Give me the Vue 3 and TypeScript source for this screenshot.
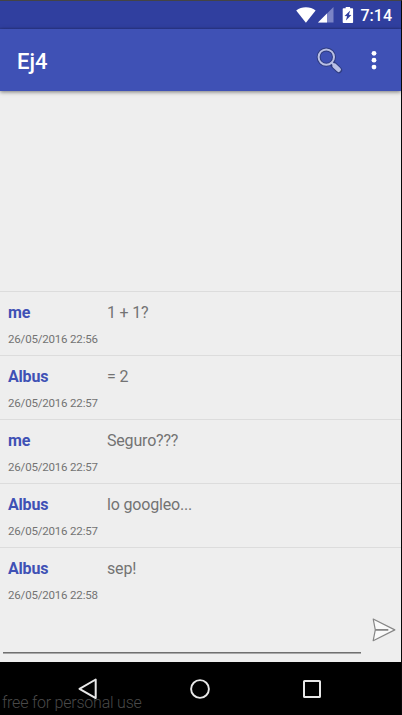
<script setup lang="ts">
interface Message {
  author: string
  text: string
  date: string
}

const messages: Message[] = [
  { author: 'me', text: '1 + 1?', date: '26/05/2016 22:56' },
  { author: 'Albus', text: '= 2', date: '26/05/2016 22:57' },
  { author: 'me', text: 'Seguro???', date: '26/05/2016 22:57' },
  { author: 'Albus', text: 'lo googleo...', date: '26/05/2016 22:57' },
  { author: 'Albus', text: 'sep!', date: '26/05/2016 22:58' },
]
</script>

<template>
  <div class="screen">
    <div class="status">
      <svg class="wifi" width="20" height="16" viewBox="0 0 20 16">
        <path d="M0.2 3.6C3 1.2 6.3 0.2 9.9 0.2S16.8 1.2 19.6 3.6L9.9 15.8Z" fill="#fff" />
      </svg>
      <svg class="signal" width="16" height="16" viewBox="0 0 16 16">
        <path d="M0 15.5L15.5 0V15.5Z" fill="#7b84c6" />
        <path d="M0 15.5L9 6.5V15.5Z" fill="#fff" />
      </svg>
      <svg class="battery" width="12" height="17" viewBox="0 0 12 17">
        <path d="M1.5 1.2H3.7V0H8.1V1.2H10.3Q11.1 1.2 11.1 2V15.2Q11.1 16 10.3 16H1.5Q.7 16 .7 15.2V2Q.7 1.2 1.5 1.2Z" fill="#fff" />
        <path d="M8.2 3.6L2.6 8.9L5.1 9.3L3.9 13.4L9.4 8.1L6.9 7.7Z" fill="#303f9f" />
      </svg>
      <span class="clock">7:14</span>
    </div>
    <header class="toolbar">
      <h1>Ej4</h1>
      <svg class="search" width="28" height="28" viewBox="0 0 28 28">
        <path d="M17.6 17.9L22.8 23" stroke="#2f3c80" stroke-width="6.6" stroke-linecap="round" />
        <circle cx="10.3" cy="10.1" r="7.7" fill="none" stroke="#2f3c80" stroke-width="4" />
        <path d="M18.6 18.8L22.6 22.7" stroke="#b9c0e5" stroke-width="4.6" stroke-linecap="round" />
        <path d="M15.3 15.2L18 18" stroke="#b9c0e5" stroke-width="2" />
        <circle cx="10.3" cy="10.1" r="7.7" fill="none" stroke="#b9c0e5" stroke-width="2" />
      </svg>
      <svg class="more" width="6" height="20" viewBox="0 0 6 20">
        <circle cx="3" cy="3.3" r="2.4" fill="#fff" />
        <circle cx="3" cy="10.2" r="2.4" fill="#fff" />
        <circle cx="3" cy="17.1" r="2.4" fill="#fff" />
      </svg>
    </header>
    <main class="chat">
      <ul class="messages">
        <li v-for="(message, index) in messages" :key="index">
          <div class="line">
            <span class="author">{{ message.author }}</span>
            <span class="text">{{ message.text }}</span>
          </div>
          <time>{{ message.date }}</time>
        </li>
      </ul>
      <div class="composer">
        <div class="field"></div>
        <svg width="24" height="24" viewBox="0 0 24 24">
          <path d="M1.2 1L22.8 11.9L1.2 22.7L3.3 11.9Z" fill="#fafafa" stroke="#868686" stroke-width="1.2" stroke-linejoin="round" />
          <path d="M3.3 11.9H16.3" stroke="#808080" stroke-width="1.7" />
        </svg>
      </div>
    </main>
    <nav>
      <svg width="20" height="22" viewBox="0 0 20 22">
        <path d="M1.5 10.8L17.7 1.5V20.1Z" fill="none" stroke="#e8e8e8" stroke-width="2" stroke-linejoin="round" />
      </svg>
      <svg width="20" height="20" viewBox="0 0 20 20">
        <circle cx="10" cy="10" r="8.9" fill="none" stroke="#e8e8e8" stroke-width="1.9" />
      </svg>
      <svg width="18" height="18" viewBox="0 0 18 18">
        <rect x="1" y="1" width="16" height="16" rx=".6" fill="none" stroke="#e8e8e8" stroke-width="2" />
      </svg>
      <span class="watermark">free for personal use</span>
    </nav>
  </div>
</template>

<style>
body {
  margin: 0;
  background: #000;
}
</style>

<style scoped>
.screen {
  box-sizing: border-box;
  width: 402px;
  height: 715px;
  border-top: 1px solid #444;
  border-right: 1px solid #080808;
  display: flex;
  flex-direction: column;
  overflow: hidden;
  font-family: Roboto, sans-serif;
  background: #eee;
}
svg {
  display: block;
  flex: none;
}
.status {
  box-sizing: border-box;
  height: 28px;
  flex: none;
  display: flex;
  align-items: flex-start;
  padding: 6px 9px 0 0;
  justify-content: flex-end;
  background: linear-gradient(#303f9f 26px, #2b398f);
}
.wifi {
  margin-right: 2px;
}
.signal {
  margin-right: 8px;
}
.battery {
  margin-right: 7px;
}
.clock {
  font-size: 16px;
  line-height: 18px;
  font-weight: 500;
  color: #fff;
}
.toolbar {
  box-sizing: border-box;
  height: 62px;
  flex: none;
  display: flex;
  align-items: center;
  padding: 0 24px 0 17px;
  background: #3f51b5;
  box-shadow: 0 1px 4px rgba(0, 0, 0, .5);
}
h1 {
  flex: 1;
  margin: 4px 0 0;
  font-size: 22px;
  line-height: 28px;
  font-weight: 500;
  color: #fff;
}
.search {
  margin: 1px 27px 0 0;
}
.chat {
  flex: 1;
  display: flex;
  flex-direction: column;
  justify-content: flex-end;
}
.messages {
  list-style: none;
  margin: 0;
  padding: 0;
}
li {
  box-sizing: border-box;
  height: 64px;
  padding: 11px 8px 0;
  border-top: 1px solid #dcdcdc;
}
.line {
  display: grid;
  grid-template-columns: 99px 1fr;
  font-size: 16px;
  line-height: 20px;
  letter-spacing: -.18px;
}
.author {
  font-weight: 700;
  color: #3f51b5;
}
.text {
  color: #737373;
}
time {
  display: block;
  margin-top: 9px;
  font-size: 11.5px;
  line-height: 14px;
  letter-spacing: -.18px;
  color: #737373;
}
.composer {
  height: 51px;
  display: flex;
  padding: 0 5px 0 3px;
  align-items: flex-start;
  justify-content: space-between;
}
.composer svg {
  margin-top: 7px;
}
.field {
  box-sizing: border-box;
  width: 358px;
  height: 42px;
  border-bottom: 1px solid #707070;
  box-shadow: 0 1px 0 #a8a8a8;
}
nav {
  position: relative;
  height: 53px;
  flex: none;
  display: grid;
  grid-template-columns: repeat(3, 112px);
  justify-content: center;
  justify-items: center;
  align-items: center;
  padding: 1px 2px 0 0;
  box-sizing: border-box;
  background: #000;
}
.watermark {
  position: absolute;
  left: 2px;
  bottom: 2px;
  font-size: 16px;
  line-height: 20px;
  font-weight: 300;
  letter-spacing: -.22px;
  white-space: nowrap;
  color: #494949;
}
</style>
